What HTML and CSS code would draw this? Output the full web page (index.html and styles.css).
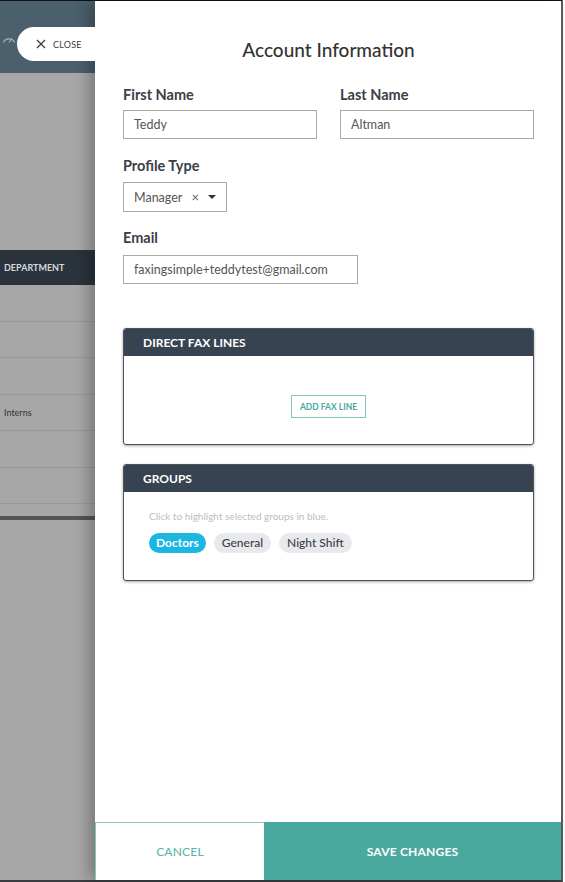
FILE: index.html
```html
<!DOCTYPE html>
<html lang="en">
<head>
  <meta charset="UTF-8">
  <title>Account Information</title>
  <link rel="stylesheet" href="styles.css">
</head>
<body>
<div class="screen">
  <div class="backdrop">
    <div class="topbar">
      <svg class="gauge" width="16" height="12" viewBox="0 0 16 12">
        <path d="M2.5 10.5 A6 6 0 0 1 13.5 10.5" fill="none" stroke="#a7b6c0" stroke-width="1.2"/>
        <path d="M8 10.5 L11 6.5" stroke="#a7b6c0" stroke-width="1.2"/>
      </svg>
      <button class="close-btn">
        <svg width="10" height="10" viewBox="0 0 10 10">
          <path d="M1 1 L9 9 M9 1 L1 9" stroke="#3c3c3c" stroke-width="1.3"/>
        </svg>
        <span>CLOSE</span>
      </button>
    </div>
    <div class="table-bg">
      <div class="table-head">DEPARTMENT</div>
      <div class="table-row"></div>
      <div class="table-row"></div>
      <div class="table-row"></div>
      <div class="table-row">Interns</div>
      <div class="table-row"></div>
      <div class="table-row"></div>
      <div class="table-rule"></div>
    </div>
  </div>

  <div class="panel">
    <div class="panel-body">
      <h1>Account Information</h1>

      <div class="row">
        <label class="field">
          <span>First Name</span>
          <input type="text" class="input" value="Teddy">
        </label>
        <label class="field">
          <span>Last Name</span>
          <input type="text" class="input" value="Altman">
        </label>
      </div>

      <div class="field field-gap">
        <span>Profile Type</span>
        <div class="select">
          <span class="select-value">Manager</span>
          <span class="select-clear">×</span>
          <span class="select-caret"></span>
        </div>
      </div>

      <label class="field field-gap email">
        <span>Email</span>
        <input type="text" class="input" value="faxingsimple+teddytest@gmail.com">
      </label>

      <div class="card card-fax">
        <div class="card-head">DIRECT FAX LINES</div>
        <div class="card-body fax-body">
          <button class="outline-btn">ADD FAX LINE</button>
        </div>
      </div>

      <div class="card">
        <div class="card-head">GROUPS</div>
        <div class="card-body groups-body">
          <p class="hint">Click to highlight selected groups in blue.</p>
          <div class="chips">
            <span class="chip active">Doctors</span>
            <span class="chip">General</span>
            <span class="chip">Night Shift</span>
          </div>
        </div>
      </div>
    </div>

    <div class="footer">
      <button class="btn-cancel">CANCEL</button>
      <button class="btn-save">SAVE CHANGES</button>
    </div>
  </div>
</div>
</body>
</html>
```

FILE: styles.css
```css
:root {
  --teal: #4aa99f;
  --teal-light: #7ccabe;
  --dark: #374351;
  --text: #3a4046;
  --font-family: 'Lato', 'Helvetica', 'Arial', sans-serif;
}

body {
  margin: 0;
  font-family: var(--font-family);
  background: #fff;
}

.screen {
  width: 561px;
  height: 879px;
  display: flex;
  border-top: 1px solid #111;
  border-right: 2px solid #5a5e63;
  border-bottom: 2px solid #3a3d40;
}

/* dimmed app behind the drawer */
.backdrop {
  width: 95px;
  flex-shrink: 0;
  background: #a7a7a7;
  overflow: hidden;
}

.topbar {
  height: 72px;
  background: #4b5f6d;
  display: flex;
  align-items: flex-start;
}

.gauge {
  width: 16px;
  flex-shrink: 0;
  margin: 31px 0 0 1px;
}

.close-btn {
  position: relative;
  z-index: 2;
  margin: 26px 0 0 0;
  height: 34px;
  flex: 1;
  border: none;
  background: #fff;
  border-radius: 17px 0 0 17px;
  display: flex;
  align-items: center;
  gap: 7px;
  padding: 0 0 0 19px;
  font-family: var(--font-family);
  font-size: 9px;
  color: #3c3c3c;
  letter-spacing: 0.2px;
}

.table-bg {
  padding-top: 177px;
}

.table-head {
  height: 35px;
  line-height: 35px;
  background: #2b333c;
  color: #d6d9dc;
  font-size: 9px;
  font-weight: 700;
  padding-left: 4px;
}

.table-row {
  height: 35.5px;
  border-bottom: 1px solid #999;
  font-size: 9px;
  color: #333;
  line-height: 36px;
  padding-left: 4px;
}

.table-row:first-of-type {
  height: 34px;
}

.table-rule {
  height: 4px;
  background: #555;
  margin-top: 12px;
}

/* drawer */
.panel {
  flex: 1;
  display: flex;
  flex-direction: column;
  background: #fff;
  box-shadow: -6px 0 14px rgba(0, 0, 0, 0.28);
  position: relative;
  z-index: 1;
}

.panel-body {
  flex: 1;
  padding: 37px 27px 0 28px;
}

h1 {
  margin: 0 0 24px;
  text-align: center;
  font-size: 19px;
  line-height: 24px;
  font-weight: 500;
  color: #333;
}

.row {
  display: flex;
  gap: 23px;
}

.row .field {
  flex: 1;
}

.field {
  display: block;
}

.field > span {
  display: block;
  font-size: 14.5px;
  line-height: 18px;
  font-weight: 700;
  color: var(--text);
  margin-bottom: 6px;
}

.field-gap {
  margin-top: 18px;
}

.field-gap > span {
  margin-bottom: 7px;
}

.email {
  margin-top: 17px;
}

.email > span {
  margin-bottom: 8px;
}

.input {
  display: block;
  width: 100%;
  height: 29px;
  box-sizing: border-box;
  border: 1px solid #a9a9a9;
  padding: 0 10px;
  font-family: var(--font-family);
  font-size: 12.5px;
  color: #555;
  outline: none;
}

.email .input {
  width: 235px;
}

.select {
  display: inline-flex;
  align-items: center;
  height: 30px;
  box-sizing: border-box;
  border: 1px solid #a9a9a9;
  padding: 0 10px;
  font-size: 12.5px;
  color: #555;
}

.select-clear {
  margin-left: 9px;
  font-size: 13px;
  color: #666;
}

.select-caret {
  margin-left: 9px;
  width: 0;
  height: 0;
  border-left: 4px solid transparent;
  border-right: 4px solid transparent;
  border-top: 4px solid #333;
}

.card {
  border: 1px solid #4a525b;
  border-radius: 3px;
  box-shadow: 0 1px 3px rgba(0, 0, 0, 0.35);
  overflow: hidden;
  margin-top: 19px;
}

.card-fax {
  margin-top: 44px;
}

.card-head {
  height: 27px;
  line-height: 28px;
  background: var(--dark);
  color: #fff;
  font-size: 12px;
  font-weight: 700;
  padding-left: 19px;
}

.card-body {
  height: 88px;
  box-sizing: border-box;
}

.fax-body {
  display: flex;
  justify-content: center;
  align-items: flex-start;
  padding-top: 39px;
}

.outline-btn {
  height: 23px;
  width: 75px;
  padding: 0;
  background: #fff;
  border: 1px solid var(--teal-light);
  color: var(--teal);
  font-family: var(--font-family);
  font-size: 8.5px;
  font-weight: 700;
}

.groups-body {
  padding: 18px 25px 0;
}

.hint {
  margin: 0;
  font-size: 10px;
  line-height: 12px;
  color: #bdbdbd;
}

.chips {
  display: flex;
  gap: 8px;
  margin-top: 11px;
}

.chip {
  height: 20px;
  line-height: 20px;
  padding: 0 8px;
  border-radius: 10px;
  background: #e8e9ec;
  color: #3b3f44;
  font-size: 12px;
  font-weight: 500;
}

.chip.active {
  padding: 0 7px;
  background: #1ab8e1;
  color: #fff;
  font-weight: 700;
}

.footer {
  display: flex;
  height: 58px;
}

.footer button {
  border: none;
  font-family: var(--font-family);
  font-size: 12px;
  font-weight: 700;
  letter-spacing: 0.2px;
  padding: 0;
}

.btn-cancel {
  width: 169px;
  background: #fff;
  color: #5cb7aa;
  border-top: 1px solid var(--teal-light) !important;
  border-left: 1px solid var(--teal-light) !important;
  font-weight: 500 !important;
}

.btn-save {
  flex: 1;
  background: var(--teal);
  color: #fff;
}
```
